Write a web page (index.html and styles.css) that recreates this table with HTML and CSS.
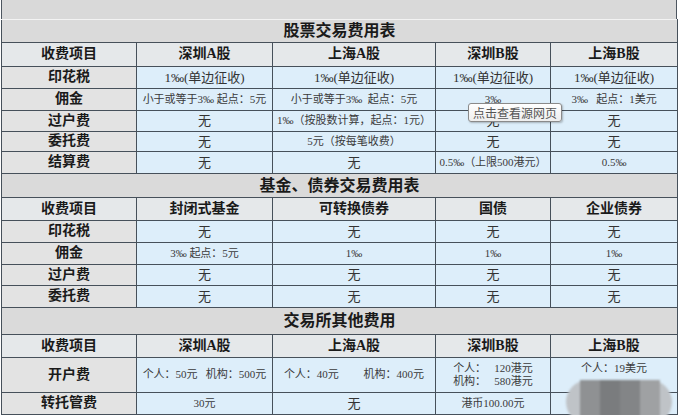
FILE: index.html
```html
<!DOCTYPE html>
<html lang="zh-CN">
<head>
<meta charset="utf-8">
<title>股票交易费用表</title>
<link rel="stylesheet" href="styles.css">
</head>
<body>
<div class="page">
  <div class="topband"></div>
  <table class="fees">
    <colgroup>
      <col class="c1"><col class="c2"><col class="c3"><col class="c4"><col class="c5">
    </colgroup>
    <tbody>
      <tr class="title h23"><td colspan="5">股票交易费用表</td></tr>
      <tr class="head h24"><td>收费项目</td><td>深圳A股</td><td>上海A股</td><td>深圳B股</td><td>上海B股</td></tr>
      <tr class="h22"><th>印花税</th><td>1‰(单边征收)</td><td>1‰(单边征收)</td><td>1‰(单边征收)</td><td>1‰(单边征收)</td></tr>
      <tr class="h22"><th>佣金</th><td class="sm">小于或等于3‰ 起点：5元</td><td class="sm">小于或等于3‰&nbsp; 起点：5元</td><td class="sm">3‰</td><td class="sm">3‰ &nbsp; 起点：1美元</td></tr>
      <tr class="h21"><th>过户费</th><td>无</td><td class="sm">1‰（按股数计算，起点：1元）</td><td>无</td><td>无</td></tr>
      <tr class="h20"><th>委托费</th><td>无</td><td class="sm">5元（按每笔收费）</td><td>无</td><td>无</td></tr>
      <tr class="h22"><th>结算费</th><td>无</td><td>无</td><td class="sm">0.5‰（上限500港元）</td><td class="sm">0.5‰</td></tr>

      <tr class="title h24"><td colspan="5">基金、债券交易费用表</td></tr>
      <tr class="head h23"><td>收费项目</td><td>封闭式基金</td><td>可转换债券</td><td>国债</td><td>企业债券</td></tr>
      <tr class="h22"><th>印花税</th><td>无</td><td>无</td><td>无</td><td>无</td></tr>
      <tr class="h22"><th>佣金</th><td class="sm">3‰ 起点：5元</td><td class="sm">1‰</td><td class="sm">1‰</td><td class="sm">1‰</td></tr>
      <tr class="h21"><th>过户费</th><td>无</td><td>无</td><td>无</td><td>无</td></tr>
      <tr class="h22"><th>委托费</th><td>无</td><td>无</td><td>无</td><td>无</td></tr>

      <tr class="title h27"><td colspan="5">交易所其他费用</td></tr>
      <tr class="head h23"><td>收费项目</td><td>深圳A股</td><td>上海A股</td><td>深圳B股</td><td>上海B股</td></tr>
      <tr class="h35"><th>开户费</th><td class="sm">个人：50元&nbsp;&nbsp; 机构：500元</td><td class="sm">个人：40元&nbsp;&nbsp;&nbsp;&nbsp;&nbsp;&nbsp;&nbsp;&nbsp; 机构：400元</td><td class="sm two">个人：&nbsp;&nbsp; 120港元<br>机构：&nbsp;&nbsp; 580港元</td><td class="sm top">个人：19美元</td></tr>
      <tr class="h22"><th>转托管费</th><td class="sm">30元</td><td>无</td><td class="sm">港币100.00元</td><td class="sm"></td></tr>
    </tbody>
  </table>
  <div class="tip">点击查看源网页</div>
  <div class="blur">
    <span class="b1"></span><span class="b2"></span><span class="b3"></span><span class="b4"></span>
  </div>
</div>
</body>
</html>
```

FILE: styles.css
```css
html, body {
  margin: 0;
  padding: 0;
  background: #ffffff;
}
.page {
  position: relative;
  width: 678px;
  height: 415px;
  overflow: hidden;
  padding-left: 1px;
  box-sizing: border-box;
  font-family: "Liberation Serif", "Noto Sans CJK SC", serif;
  color: #222;
}
.topband {
  width: 676px;
  height: 20px;
  box-sizing: border-box;
  background: #d9d9d9;
  border-left: 1px solid #4d5660;
  border-right: 1px solid #4d5660;
  border-bottom: 1px solid #f3f3f3;
}
.fees {
  width: 676px;
  border-collapse: collapse;
  table-layout: fixed;
  margin-top: -1px;
}
.c1 { width: 135px; }
.c2 { width: 136px; }
.c3 { width: 163px; }
.c4 { width: 115px; }
.c5 { width: 127px; }
.fees td, .fees th {
  border: 1px solid #46505a;
  padding: 0;
  text-align: center;
  vertical-align: middle;
  white-space: nowrap;
  overflow: hidden;
  line-height: 1.2;
}
.fees td {
  background: #ddeefa;
  font-size: 13px;
  color: #333;
}
.fees th {
  background: #e3e3e3;
  font-size: 14px;
  font-weight: bold;
  color: #1a1a1a;
}
.fees td.sm {
  font-size: 11px;
  color: #3a3a3a;
}
.fees td.two {
  line-height: 13px;
}
.fees td.top {
  vertical-align: top;
  padding-top: 4px;
}
.fees .title td {
  background: #dadada;
  font-size: 16px;
  font-weight: bold;
  color: #1a1a1a;
  border-top-color: #46505a;
}
.fees tr.title:first-child td {
  border-top: 1px solid #f3f3f3;
}
.fees .head td {
  background: #e5e8ea;
  font-size: 14px;
  font-weight: bold;
  color: #1a1a1a;
}
.h20 { height: 20px; }
.h21 { height: 21px; }
.h22 { height: 22px; }
.h23 { height: 23px; }
.h24 { height: 24px; }
.h27 { height: 27px; }
.h35 { height: 35px; }

.tip {
  position: absolute;
  left: 468px;
  top: 103px;
  width: 94px;
  height: 19px;
  box-sizing: border-box;
  border: 1px solid #8a8a8a;
  border-radius: 3px;
  background: linear-gradient(#ffffff, #eeeeee);
  font-family: "Noto Sans CJK SC", sans-serif;
  font-size: 12px;
  line-height: 17px;
  color: #555;
  text-align: center;
  box-shadow: 1px 1px 2px rgba(0,0,0,0.25);
}
.blur {
  position: absolute;
  left: 566px;
  top: 380px;
  width: 106px;
  height: 44px;
  border-radius: 22px;
  background: #bfc3c7;
  filter: blur(1px);
  display: flex;
  padding-left: 14px;
  box-sizing: border-box;
}
.blur span {
  display: block;
  width: 20px;
  height: 100%;
}
.b1 { background: #8f9193; }
.b2 { background: #7a7c7e; }
.b3 { background: #838587; }
.b4 { background: #9fa1a3; }
```
